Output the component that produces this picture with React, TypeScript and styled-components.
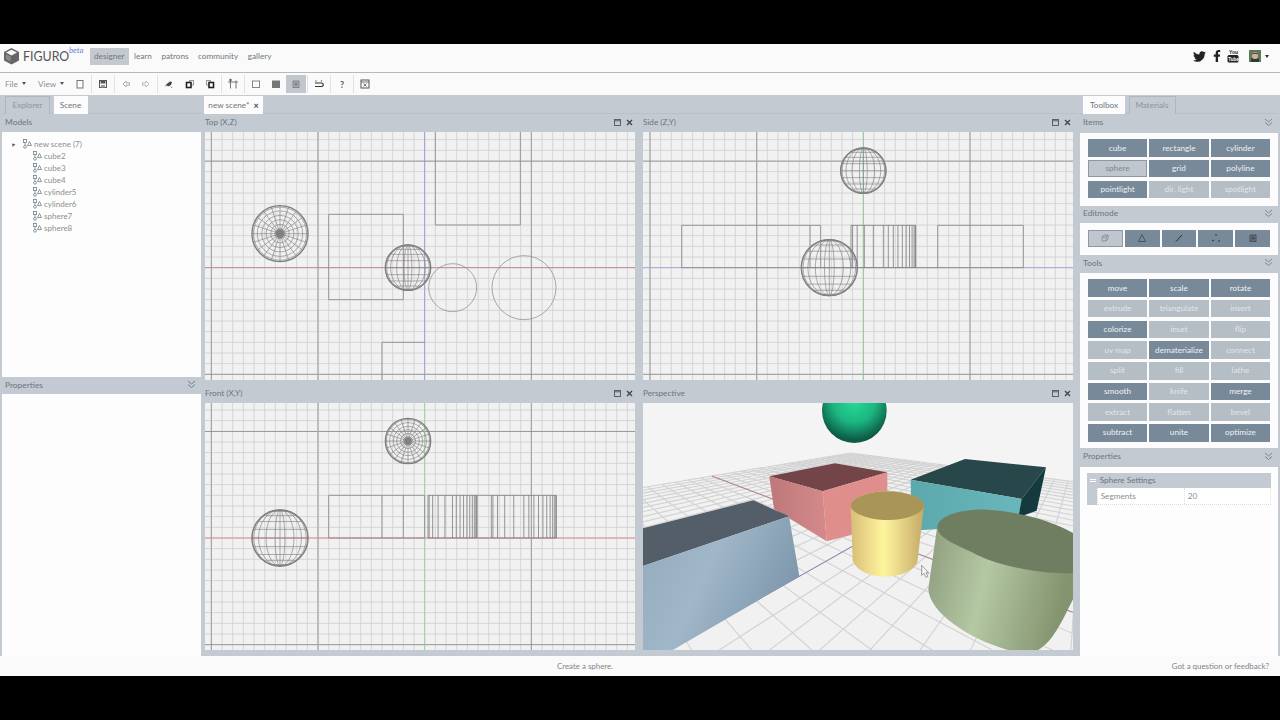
import React from "react";
import styled, { createGlobalStyle } from "styled-components";
import { FaTwitter, FaFacebookF } from "react-icons/fa";

const GlobalStyle = createGlobalStyle`
  html, body { margin: 0; padding: 0; background: #000; }
  * { box-sizing: border-box; }
  #root { font-family: "Lato", "Liberation Sans", sans-serif; }
`;

const GREY = "#c3cad1";

const Page = styled.div`
  width: 1280px; height: 720px; padding: 44px 0; background: #000;
  display: flex; flex-direction: column; overflow: hidden;
  font-size: 9px; color: #7d858c;
`;
const TopBar = styled.header`
  height: 29px; background: #fafafa; border-bottom: 1px solid #b5b9bd;
  display: flex; align-items: center; padding: 0 11.5px 4px 3px;
`;
const Logo = styled.div`
  display: flex; align-items: center; width: 87px; position: relative; color: #555;
  font-size: 12.4px; font-weight: 400; gap: 3px;
`;
const Beta = styled.span`
  position: absolute; left: 66px; top: -2px; font-size: 7.8px; font-style: italic; color: #7284cf;
`;
const NavLink = styled.a<{ $on?: boolean }>`
  height: 17px; line-height: 16px; padding: 0 4px; margin-right: 1.5px; font-size: 8.2px;
  color: #6f7780; background: ${(p) => (p.$on ? "#c3c9cf" : "transparent")};
`;
const Social = styled.div`
  margin-left: auto; display: flex; align-items: center; gap: 4px; color: #222;
`;
const TwitterWrap = styled.span`
  display: flex; margin-right: 1px;
`;
const Avatar = styled.svg`
  margin-left: 6px;
`;
const Caret = styled.span<{ $dark?: boolean }>`
  display: inline-block; width: 0; height: 0; border-left: 2.5px solid transparent; border-right: 2.5px solid transparent;
  border-top: 3px solid ${(p) => (p.$dark ? "#333" : "#555")};
`;
const Toolbar = styled.div`
  height: 22px; background: #fafafa; display: flex; align-items: center; padding-left: 5px; flex: none;
`;
const MenuText = styled.div<{ $w: number }>`
  width: ${(p) => p.$w}px; display: flex; align-items: center; gap: 4px; color: #8a8f95; font-size: 8.2px; padding-bottom: 1px;
`;
const ToolBtn = styled.div<{ $on?: boolean }>`
  width: 20.1px; height: 17.5px; display: flex; align-items: center; justify-content: center;
  background: ${(p) => (p.$on ? "#c0c7ce" : "transparent")};
  font-size: 9px; font-weight: 700; color: #555;
`;
const Sep = styled.span`
  width: 1px; height: 18px; margin: 0 1px; background: #dfe2e5;
`;
const Main = styled.main`
  height: 561px; display: flex; background: ${GREY}; flex: none;
`;
const LeftCol = styled.section`
  width: 201px; margin-right: 2px; padding-left: 2px; display: flex; flex-direction: column;
`;
const CenterCol = styled.section`
  width: 875px; margin-right: 2px; display: flex; flex-direction: column;
`;
const RightCol = styled.section`
  width: 200px; padding-right: 2px; display: flex; flex-direction: column;
`;
const TabStrip = styled.div<{ $pad?: number }>`
  height: 19px; display: flex; align-items: flex-end; gap: 3.5px; padding-left: ${(p) => p.$pad ?? 0}px; flex: none;
  border-bottom: 1px solid #b9c0c7;
`;
const Tab = styled.div<{ $on?: boolean; $w: number }>`
  width: ${(p) => p.$w}px; height: 18px; margin-bottom: -1px; padding-bottom: 1px; display: flex; align-items: center; justify-content: center; gap: 4px;
  font-size: 8.2px; color: ${(p) => (p.$on ? "#6e767e" : "#8d959d")};
  background: ${(p) => (p.$on ? "#fcfcfc" : "#c3cad1")};
  border: 1px solid ${(p) => (p.$on ? "#fcfcfc" : "#aeb6be")};
  border-bottom: none;
`;
const TabClose = styled.span`
  font-weight: 900; color: #555; font-size: 9px;
`;
const PanelHead = styled.div<{ $h?: number }>`
  height: ${(p) => p.$h ?? 18}px; display: flex; align-items: center; justify-content: space-between; flex: none;
  padding: 0 5px 2px 3px; color: #6d757d; font-size: 8.4px; background: ${GREY};
`;
const WhiteBody = styled.div<{ $h?: number }>`
  background: #fdfdfd; flex: ${(p) => (p.$h ? "none" : "1")}; height: ${(p) => (p.$h ? `${p.$h}px` : "auto")};
`;
const Tree = styled.ul`
  list-style: none; margin: 0; padding: 6px 0 0 9px; font-size: 8px; color: #8e8e8e;
`;
const TreeRow = styled.li<{ $child?: boolean }>`
  height: 12px; display: flex; align-items: center; gap: 2px; padding-left: ${(p) => (p.$child ? 22 : 0)}px;
`;
const Twisty = styled.span`
  width: 0; height: 0; margin: 0 6px 0 0; border-left: 2.5px solid transparent; border-right: 2.5px solid transparent; border-bottom: 3.5px solid #666;
  transform: rotate(-45deg);
`;
const ViewGrid = styled.div`
  flex: 1; display: grid; grid-template-columns: 436px 439px; grid-template-rows: 271px 271px;
`;
const ViewPane = styled.div<{ $right?: boolean }>`
  display: flex; flex-direction: column; padding: 0 ${(p) => (p.$right ? 5 : 4)}px 5px ${(p) => (p.$right ? 4 : 2)}px;
`;
const ViewHead = styled.div`
  height: 18px; flex: none; display: flex; align-items: center; justify-content: space-between; padding: 0 2px 2px 0;
  font-size: 8.2px; color: #6d757d;
`;
const WinIcons = styled.div`
  display: flex; gap: 5px; align-items: center;
`;
const Canvas = styled.svg`
  display: block; background: #f1f1f1; flex: none;
`;
const Section = styled.div<{ $h: number }>`
  height: ${(p) => p.$h}px; flex: none; background: #fcfcfc; padding: 6.6px 8px 0;
`;
const BtnGrid = styled.div<{ $cols: number }>`
  display: grid; grid-template-columns: repeat(${(p) => p.$cols}, 1fr); column-gap: ${(p) => (p.$cols === 5 ? 1.8 : 2.3)}px; row-gap: 3.2px;
`;
const ToolButton = styled.div<{ $kind: "dark" | "light" | "active" }>`
  height: 17.5px; padding-bottom: 1px; display: flex; align-items: center; justify-content: center; font-size: 8.2px;
  color: ${(p) => (p.$kind === "dark" ? "#eef1f3" : p.$kind === "light" ? "#e2e6e9" : "#7d8894")};
  background: ${(p) => (p.$kind === "dark" ? "#78899a" : p.$kind === "light" ? "#b5bdc5" : "#bfc6cd")};
  border: ${(p) => (p.$kind === "active" ? "1px solid #8d98a3" : "none")};
`;
const PropBox = styled.div`
  margin: 6.6px 0 0 6.7px; width: 184px; background: ${GREY};
`;
const PropTitle = styled.div`
  height: 15px; display: flex; align-items: center; gap: 4px; padding: 0 0 1px 3px; font-size: 8.2px; color: #6d757d;
`;
const Minus = styled.span`
  width: 6px; height: 3px; border-top: 1px solid #fff; border-bottom: 1px solid #fff;
`;
const PropRow = styled.div`
  margin-left: 10px; height: 17px; display: grid; grid-template-columns: 86px 1fr; background: #fff;
  border: 1px dotted #d9dde1; border-top: none; font-size: 8.2px; color: #8a8f95;
`;
const PropCell = styled.div`
  display: flex; align-items: center; padding: 0 0 1px 3px; & + & { border-left: 1px dotted #d9dde1; }
`;
const StatusBar = styled.footer`
  height: 20px; background: #fafafa; position: relative; display: flex; align-items: center; flex: none;
  font-size: 7.9px; color: #7f868d; padding: 0 11px 1px 0;
`;
const StatusMid = styled.span`
  margin-left: 557px;
`;
const StatusEnd = styled.span`
  margin-left: auto;
`;

/* ---------- small drawings ---------- */
const Chevrons = ({ c = "#7e8790" }: { c?: string }) => (
  <svg width="9" height="9" viewBox="0 0 9 9" fill="none" stroke={c} strokeWidth="1">
    <path d="M1 1l3.5 3L8 1M1 4.5l3.5 3 3.5-3" />
  </svg>
);
const NodeIcon = () => (
  <svg width="9" height="10" viewBox="0 0 9 10" fill="none" stroke="#6f7f88" strokeWidth="0.8">
    <rect x="0.5" y="0.5" width="3" height="3" />
    <circle cx="2" cy="7.8" r="1.4" />
    <path d="M6.5 2.5l2 4h-4z" />
    <path d="M2 3.5v3" />
  </svg>
);
const WinBtns = () => (
  <WinIcons>
    <svg width="7" height="7" viewBox="0 0 7 7" fill="none" stroke="#555" strokeWidth="0.9">
      <rect x="0.5" y="0.5" width="6" height="6" />
      <path d="M0.5 1.8h6" />
    </svg>
    <svg width="7" height="7" viewBox="0 0 7 7" fill="none" stroke="#444" strokeWidth="1.3">
      <path d="M1 1l5 5M6 1L1 6" />
    </svg>
  </WinIcons>
);
const Ic = ({ children }: { children: React.ReactNode }) => (
  <svg width="12" height="12" viewBox="0 0 12 12" fill="none" stroke="#555" strokeWidth="1">{children}</svg>
);

/* ---------- wireframe views (coordinates are 3× page pixels) ---------- */
const range = (a: number, b: number) => Array.from({ length: b - a + 1 }, (_, i) => a + i);

const Sphere = ({ cx, cy, r, polar }: { cx: number; cy: number; r: number; polar?: boolean }) => {
  const lats = [0, 1, 2, 3, 4].flatMap((i) => (i === 0 ? [0] : [(i * Math.PI) / 10, (-i * Math.PI) / 10]));
  const lons = [0, 1, 2, 3, 4].map((i) => (i * Math.PI) / 9);
  return (
    <g fill="none" stroke="#808080" strokeWidth="1.9">
      {polar ? (
        <>
          {[0.95, 0.81, 0.65, 0.5, 0.33, 0.18].map((k) => <circle key={k} cx={cx} cy={cy} r={r * k} />)}
          {range(0, 19).map((i) => {
            const t = (i * Math.PI) / 10;
            return <line key={i} x1={cx + r * 0.07 * Math.cos(t)} y1={cy + r * 0.07 * Math.sin(t)} x2={cx + r * Math.cos(t)} y2={cy + r * Math.sin(t)} />;
          })}
          <circle cx={cx} cy={cy} r={r * 0.16} fill="#808080" stroke="none" />
        </>
      ) : (
        <>
          {lats.map((l) => {
            const y = cy + r * Math.sin(l);
            const w = r * Math.cos(l);
            return <line key={l} x1={cx - w} x2={cx + w} y1={y} y2={y} />;
          })}
          {lons.map((l) => <ellipse key={l} cx={cx} cy={cy} rx={Math.abs(r * Math.cos(l))} ry={r} />)}
          <line x1={cx} x2={cx} y1={cy - r} y2={cy + r} />
        </>
      )}
      <circle cx={cx} cy={cy} r={r} strokeWidth="4.2" />
    </g>
  );
};

const Stripes = ({ x1, x2, y1, y2 }: { x1: number; x2: number; y1: number; y2: number }) => {
  const c = (x1 + x2) / 2;
  const r = (x2 - x1) / 2;
  return (
    <g stroke="#7c7c7c" strokeWidth="2.4" fill="none">
      <line x1={x1} x2={x2} y1={y1} y2={y1} />
      <line x1={x1} x2={x2} y1={y2} y2={y2} />
      {range(0, 10).map((i) => {
        const x = c + r * Math.cos((i * Math.PI) / 10);
        return <line key={i} x1={x} x2={x} y1={y1} y2={y2} />;
      })}
      {range(0, 4).map((i) => {
        const x = c + r * Math.cos((i * Math.PI) / 10 + 0.16);
        return <line key={`b${i}`} x1={x} x2={x} y1={y1} y2={y2} />;
      })}
    </g>
  );
};

const Ortho = ({ box, ax, ay, h, v, children, height }: {
  box: string; ax: number; ay: number; h: string; v: string; children: React.ReactNode; height: number;
}) => (
  <Canvas width="430" height={height} viewBox={box}>
    <g stroke="#d3d3d3" strokeWidth="2.8">
      {range(-45, 45).map((k) => <line key={k} x1={ax + 32 * k} x2={ax + 32 * k} y1="0" y2="800" />)}
      {range(-30, 30).map((k) => <line key={k} x1="-20" x2="1400" y1={ay + 32 * k} y2={ay + 32 * k} />)}
    </g>
    <g stroke="#8a8a8a" strokeWidth="2.4">
      {[-2, 1, 2].map((k) => <line key={k} x1={ax + 320 * k} x2={ax + 320 * k} y1="0" y2="800" />)}
      <line x1="-20" x2="1400" y1={ay - 319.5} y2={ay - 319.5} />
      <line x1="-20" x2="1400" y1={ay + 320} y2={ay + 320} />
    </g>
    <line x1={ax - 320} x2={ax - 320} y1="0" y2="800" stroke="#aaa" strokeWidth="4" />
    <line x1="-20" x2="1400" y1={ay} y2={ay} stroke={h} strokeWidth="3" />
    <line x1={ax} x2={ax} y1="0" y2="800" stroke={v} strokeWidth="2.4" />
    {children}
  </Canvas>
);

const Frame = ({ d }: { d: string }) => <path d={d} fill="none" stroke="#8c8c8c" strokeWidth="2.6" />;

const TopView = () => (
  <Ortho box="0 6 1290 744" ax={659} ay={413} h="#c08a8e" v="#8d8de0" height={248}>
    <Frame d="M371 253H595V509H371Z" />
    <Frame d="M691 0V285H946V0" />
    <Frame d="M531 760V637H659" />
    <Sphere cx={225} cy={311} r={84} polar />
    <Sphere cx={609} cy={413} r={68} />
    <circle cx={743} cy={473} r={72} fill="none" stroke="#8c8c8c" strokeWidth="2.2" />
    <circle cx={957} cy={473} r={96} fill="none" stroke="#8c8c8c" strokeWidth="2.2" />
  </Ortho>
);
const SideView = () => (
  <Ortho box="9 6 1290 744" ax={670} ay={413} h="#a8a8d8" v="#7fc48a" height={248}>
    <Frame d="M125 413V286H542V413M510 286V413M125 413H633M893 413V286H1150V413ZM827 413H893" />
    <Stripes x1={633} x2={827} y1={286} y2={413} />
    <Sphere cx={670} cy={122} r={68} />
    <Sphere cx={568} cy={413} r={84} />
  </Ortho>
);
const FrontView = () => (
  <Ortho box="0 12 1290 741" ax={659} ay={417} h="#e08a8e" v="#88d090" height={247}>
    <Frame d="M371 417V289H659V417ZM531 289V417M595 289V417" />
    <Stripes x1={669} x2={816} y1={289} y2={417} />
    <Stripes x1={859} x2={1054} y1={289} y2={417} />
    <Frame d="M816 289H859M816 417H859" />
    <Sphere cx={609} cy={126} r={68} polar />
    <Sphere cx={225} cy={417} r={84} />
  </Ortho>
);

/* ---------- perspective (homography fitted to the floor's two vanishing points) ---------- */
const VR = [-279, 89.5];
const VB = [1341, 89];
const O = [692, 456];
const L = 20;
const a = 0.963 / L;
const b = 1.152 / L;
const proj = (u: number, v: number) => {
  const w = a * u + b * v + 1;
  return [(a * u * VR[0] + b * v * VB[0] + O[0]) / w, (a * u * VR[1] + b * v * VB[1] + O[1]) / w];
};
const segU = (v: number) => {
  const uMin = Math.max(-L, (0.09 - 1 - b * v) / a);
  return [proj(L, v), proj(uMin, v)];
};
const segV = (u: number) => {
  const vMin = Math.max(-L, (0.09 - 1 - a * u) / b);
  return [proj(u, L), proj(u, vMin)];
};
const Seg = ({ s, c, w }: { s: number[][]; c: string; w: number }) => (
  <line x1={s[0][0]} y1={s[0][1]} x2={s[1][0]} y2={s[1][1]} stroke={c} strokeWidth={w} />
);

const Perspective = () => (
  <Canvas width="430" height="247" viewBox="9 57 1290 741">
    <defs>
      <radialGradient id="gball" cx="50%" cy="35%" r="60%">
        <stop offset="0%" stopColor="#25dc94" />
        <stop offset="55%" stopColor="#1cb682" />
        <stop offset="100%" stopColor="#0d5c46" />
      </radialGradient>
      <linearGradient id="gyel" x1="0" x2="1" y1="0" y2="0">
        <stop offset="0%" stopColor="#d8bd76" />
        <stop offset="45%" stopColor="#fff59e" />
        <stop offset="100%" stopColor="#c4a966" />
      </linearGradient>
      <linearGradient id="ggreen" x1="0" x2="1" y1="0" y2="0.2">
        <stop offset="0%" stopColor="#8c9b7d" />
        <stop offset="45%" stopColor="#b4c8a4" />
        <stop offset="100%" stopColor="#84946f" />
      </linearGradient>
      <linearGradient id="gblue" x1="0" x2="1" y1="0" y2="0.4">
        <stop offset="0%" stopColor="#92aabd" />
        <stop offset="50%" stopColor="#a0b7c9" />
        <stop offset="100%" stopColor="#7f98ac" />
      </linearGradient>
      <linearGradient id="gteal" x1="0" x2="1" y1="0" y2="0">
        <stop offset="0%" stopColor="#5ca8ad" />
        <stop offset="100%" stopColor="#69b7bb" />
      </linearGradient>
      <linearGradient id="gred" x1="0" x2="1" y1="0" y2="0">
        <stop offset="0%" stopColor="#bd7879" />
        <stop offset="100%" stopColor="#d58a8a" />
      </linearGradient>
    </defs>
    <rect x="9" y="57" width="1290" height="741" fill="#f4f4f4" />
    <polygon points={`${proj(L, L)} ${proj(L, -L * 0.4)} -100,900 1400,900 ${proj(-L * 0.4, L)}`} fill="#f1f1f1" />
    <g>
      {range(-L, L).map((k) => <Seg key={`u${k}`} s={segU(k)} c="#d2d2d2" w={3.4} />)}
      {range(-L, L).map((k) => <Seg key={`v${k}`} s={segV(k)} c="#d2d2d2" w={3.4} />)}
    </g>
    <Seg s={segU(0)} c="#a9666c" w={2.4} />
    <Seg s={segV(0)} c="#6d6db0" w={2.4} />

    <ellipse cx="643" cy="80" rx="97" ry="97" fill="url(#gball)" />

    <polygon points="388,277 585,238 742,265 548,322" fill="#744548" />
    <polygon points="388,277 548,322 560,472 402,375" fill="url(#gred)" />
    <polygon points="548,322 742,265 742,425 560,472" fill="#e08e8c" />

    <polygon points="812,287 975,225 1218,250 1145,345" fill="#27474a" />
    <polygon points="812,287 1145,345 1132,420 815,440" fill="url(#gteal)" />
    <polygon points="1218,250 1145,345 1135,400 1190,380" fill="#143a3e" />

    <polygon points="0,435 340,349 447,397 0,549" fill="#535e68" />
    <polygon points="0,549 447,397 478,577 100,797 0,800" fill="url(#gblue)" />

    <path d="M632 365C632 345 680 322 742 322C805 322 852 345 852 365L832 535C815 565 775 578 735 578C690 578 650 560 638 530Z" fill="url(#gyel)" />
    <path d="M632 365C632 345 680 322 742 322C805 322 852 345 852 365C852 385 805 408 742 408C680 408 632 385 632 365Z" fill="#aa9558" />

    <path d="M892 425L865 615C868 685 985 765 1110 800H1190C1235 780 1265 715 1302 640V450Z" fill="url(#ggreen)" />
    <path d="M892 425C905 388 980 375 1040 377C1120 380 1240 410 1302 450V567C1230 572 1100 555 1010 512C950 482 888 462 892 425Z" fill="#6f7d60" />

    <path d="M845 544V574L852 568L858 580L864 577L858 566H866Z" fill="#f4f4f4" stroke="#777" strokeWidth="2" />
  </Canvas>
);

/* ---------- data ---------- */
type Kind = "dark" | "light" | "active";
const items: [string, Kind][] = [
  ["cube", "dark"], ["rectangle", "dark"], ["cylinder", "dark"],
  ["sphere", "active"], ["grid", "dark"], ["polyline", "dark"],
  ["pointlight", "dark"], ["dir. light", "light"], ["spotlight", "light"],
];
const tools: [string, Kind][] = [
  ["move", "dark"], ["scale", "dark"], ["rotate", "dark"],
  ["extrude", "light"], ["triangulate", "light"], ["insert", "light"],
  ["colorize", "dark"], ["inset", "light"], ["flip", "light"],
  ["uv map", "light"], ["dematerialize", "dark"], ["connect", "light"],
  ["split", "light"], ["fill", "light"], ["lathe", "light"],
  ["smooth", "dark"], ["knife", "light"], ["merge", "dark"],
  ["extract", "light"], ["flatten", "light"], ["bevel", "light"],
  ["subtract", "dark"], ["unite", "dark"], ["optimize", "dark"],
];
const models = ["cube2", "cube3", "cube4", "cylinder5", "cylinder6", "sphere7", "sphere8"];

const Tbtn = ({ on, children }: { on?: boolean; children: React.ReactNode }) => <ToolBtn $on={on}>{children}</ToolBtn>;

export default function App() {
  return (
    <Page>
      <GlobalStyle />
      <TopBar>
        <Logo>
          <svg width="17" height="18" viewBox="0 0 17 18">
            <path d="M8.5 1L16 5v8.5L8.5 17.5 1 13.5V5z" fill="#666" />
            <path d="M8.5 2.8L14 5.6 8.5 8.4 3 5.6z" fill="#fafafa" />
            <path d="M3 7.2l4.7 2.4v5L3 12.2z" fill="#8a8a8a" />
          </svg>
          FIGURO
          <Beta>beta</Beta>
        </Logo>
        <NavLink $on>designer</NavLink>
        <NavLink>learn</NavLink>
        <NavLink>patrons</NavLink>
        <NavLink>community</NavLink>
        <NavLink>gallery</NavLink>
        <Social>
          <TwitterWrap><FaTwitter size={13} /></TwitterWrap>
          <FaFacebookF size={12} />
          <svg width="12" height="14" viewBox="0 0 12 14">
            <text x="2" y="5" fontSize="5" fontWeight="700" fontFamily="Liberation Sans, sans-serif" fill="#222">You</text>
            <rect x="0.5" y="6" width="11" height="7.5" rx="1.5" fill="#222" />
            <text x="1.3" y="12" fontSize="4.6" fontWeight="700" fontFamily="Liberation Sans, sans-serif" fill="#fff">Tube</text>
          </svg>
          <Avatar width="12" height="12" viewBox="0 0 12 12">
            <rect width="12" height="12" fill="#5c7a56" />
            <rect x="2" y="8.5" width="8" height="3.5" fill="#2f3a30" />
            <ellipse cx="6" cy="5.5" rx="3" ry="3.6" fill="#d3b09a" />
            <path d="M3 4.5C3 2 9 2 9 4.5 7 3.6 5 3.6 3 4.5z" fill="#4a3a2c" />
          </Avatar>
          <Caret $dark />
        </Social>
      </TopBar>

      <Toolbar>
        <MenuText $w={33}>File <Caret /></MenuText>
        <MenuText $w={32}>View <Caret /></MenuText>
        <Tbtn><Ic><rect x="3" y="2.5" width="6" height="7.5" stroke="#777" /></Ic></Tbtn>
        <Sep />
        <Tbtn><Ic><rect x="2.5" y="2.5" width="7" height="7" /><rect x="4" y="3" width="4" height="2" fill="#555" /><rect x="4" y="7" width="4" height="2.5" fill="#999" stroke="none" /></Ic></Tbtn>
        <Sep />
        <Tbtn><Ic><path d="M6 3L3 6l3 3V7.2h3.5V4.8H6z" stroke="#aaa" /></Ic></Tbtn>
        <Tbtn><Ic><path d="M6 3l3 3-3 3V7.2H2.5V4.8H6z" stroke="#bbb" /></Ic></Tbtn>
        <Sep />
        <Tbtn><Ic><path d="M3 6.5l4-3 2 .5-1 3-3 1.5z" fill="#444" stroke="none" /><path d="M2 8l2-1M8 8.5l1 1.5" stroke="#888" /></Ic></Tbtn>
        <Tbtn><Ic><rect x="5.5" y="2.5" width="4" height="4.5" stroke="#999" /><rect x="2.5" y="4.5" width="4.5" height="5" fill="#fff" strokeWidth="1.6" stroke="#222" /></Ic></Tbtn>
        <Tbtn><Ic><rect x="2.5" y="2.5" width="4" height="4.5" stroke="#999" /><rect x="5" y="4.5" width="4.5" height="5" fill="#fff" strokeWidth="1.6" stroke="#222" /></Ic></Tbtn>
        <Sep />
        <Tbtn><Ic><path d="M1 4h10M3.5 2V10.5M9 2.5V10.5" strokeWidth="0.9" stroke="#666" /><circle cx="3.5" cy="2" r="1.2" fill="#555" stroke="none" /></Ic></Tbtn>
        <Sep />
        <Tbtn><Ic><rect x="2.5" y="3" width="7" height="6.5" stroke="#888" /></Ic></Tbtn>
        <Tbtn><Ic><rect x="2.5" y="3" width="7" height="6.5" fill="#777" stroke="#777" /></Ic></Tbtn>
        <Tbtn on><Ic><path d="M3 3l6 6.5M9 3L3 9.5M3 3h6M3 6.2h6M3 9.5h6M3 3v6.5M6 3v6.5M9 3v6.5" stroke="#777" strokeWidth="0.8" /></Ic></Tbtn>
        <Sep />
        <Tbtn><Ic><path d="M3 3.5v-1M8.5 3.5v-1M2 5h6.5a1.5 1.5 0 0 1 0 3.5H2" strokeWidth="1.2" stroke="#333" /></Ic></Tbtn>
        <Sep />
        <Tbtn>?</Tbtn>
        <Sep />
        <Tbtn><Ic><rect x="2" y="2" width="8" height="8" /><path d="M2 4h8M4.5 5.5l3 3M7.5 5.5l-3 3" strokeWidth="0.8" /></Ic></Tbtn>
      </Toolbar>

      <Main>
        <LeftCol>
          <TabStrip $pad={3}>
            <Tab $w={45}>Explorer</Tab>
            <Tab $w={34} $on>Scene</Tab>
          </TabStrip>
          <PanelHead>Models</PanelHead>
          <WhiteBody $h={245}>
            <Tree>
              <TreeRow><Twisty /><NodeIcon />new scene (7)</TreeRow>
              {models.map((m) => <TreeRow key={m} $child><NodeIcon />{m}</TreeRow>)}
            </Tree>
          </WhiteBody>
          <PanelHead $h={17}>Properties<Chevrons c="#6f8190" /></PanelHead>
          <WhiteBody />
        </LeftCol>

        <CenterCol>
          <TabStrip $pad={1}>
            <Tab $w={59} $on>new scene* <TabClose>×</TabClose></Tab>
          </TabStrip>
          <ViewGrid>
            <ViewPane>
              <ViewHead>Top (X,Z)<WinBtns /></ViewHead>
              <TopView />
            </ViewPane>
            <ViewPane $right>
              <ViewHead>Side (Z,Y)<WinBtns /></ViewHead>
              <SideView />
            </ViewPane>
            <ViewPane>
              <ViewHead>Front (X,Y)<WinBtns /></ViewHead>
              <FrontView />
            </ViewPane>
            <ViewPane $right>
              <ViewHead>Perspective<WinBtns /></ViewHead>
              <Perspective />
            </ViewPane>
          </ViewGrid>
        </CenterCol>

        <RightCol>
          <TabStrip $pad={3}>
            <Tab $w={42} $on>Toolbox</Tab>
            <Tab $w={47}>Materials</Tab>
          </TabStrip>
          <PanelHead $h={18.7}>Items<Chevrons /></PanelHead>
          <Section $h={73}>
            <BtnGrid $cols={3}>
              {items.map(([t, k]) => <ToolButton key={t} $kind={k}>{t}</ToolButton>)}
            </BtnGrid>
          </Section>
          <PanelHead $h={17.6}>Editmode<Chevrons /></PanelHead>
          <Section $h={31.7}>
            <BtnGrid $cols={5}>
              <ToolButton $kind="active"><Ic><path d="M3 5l2-2h4v4l-2 2H3zM3 5h4v4M7 5l2-2" stroke="#7d8894" strokeWidth="0.8" /></Ic></ToolButton>
              <ToolButton $kind="dark"><Ic><path d="M6 2.5L9.5 9.5h-7z" stroke="#3d4a56" strokeWidth="0.8" /></Ic></ToolButton>
              <ToolButton $kind="dark"><Ic><path d="M3 9.5L9 3" stroke="#222" strokeWidth="0.9" /></Ic></ToolButton>
              <ToolButton $kind="dark"><Ic><path d="M6 3h.01M3 8.5h.01M9 9h.01" stroke="#222" strokeWidth="1.5" strokeLinecap="round" /></Ic></ToolButton>
              <ToolButton $kind="dark"><Ic><path d="M3 3l6 6.5M9 3L3 9.5M3 3h6M3 6.2h6M3 9.5h6M3 3v6.5M6 3v6.5M9 3v6.5" stroke="#444" strokeWidth="0.8" /></Ic></ToolButton>
            </BtnGrid>
          </Section>
          <PanelHead $h={17.7}>Tools<Chevrons /></PanelHead>
          <Section $h={175.6}>
            <BtnGrid $cols={3}>
              {tools.map(([t, k]) => <ToolButton key={t} $kind={k}>{t}</ToolButton>)}
            </BtnGrid>
          </Section>
          <PanelHead $h={18.4}>Properties<Chevrons /></PanelHead>
          <WhiteBody>
            <PropBox>
              <PropTitle><Minus />Sphere Settings</PropTitle>
              <PropRow>
                <PropCell>Segments</PropCell>
                <PropCell>20</PropCell>
              </PropRow>
            </PropBox>
          </WhiteBody>
        </RightCol>
      </Main>

      <StatusBar>
        <StatusMid>Create a sphere.</StatusMid>
        <StatusEnd>Got a question or feedback?</StatusEnd>
      </StatusBar>
    </Page>
  );
}
